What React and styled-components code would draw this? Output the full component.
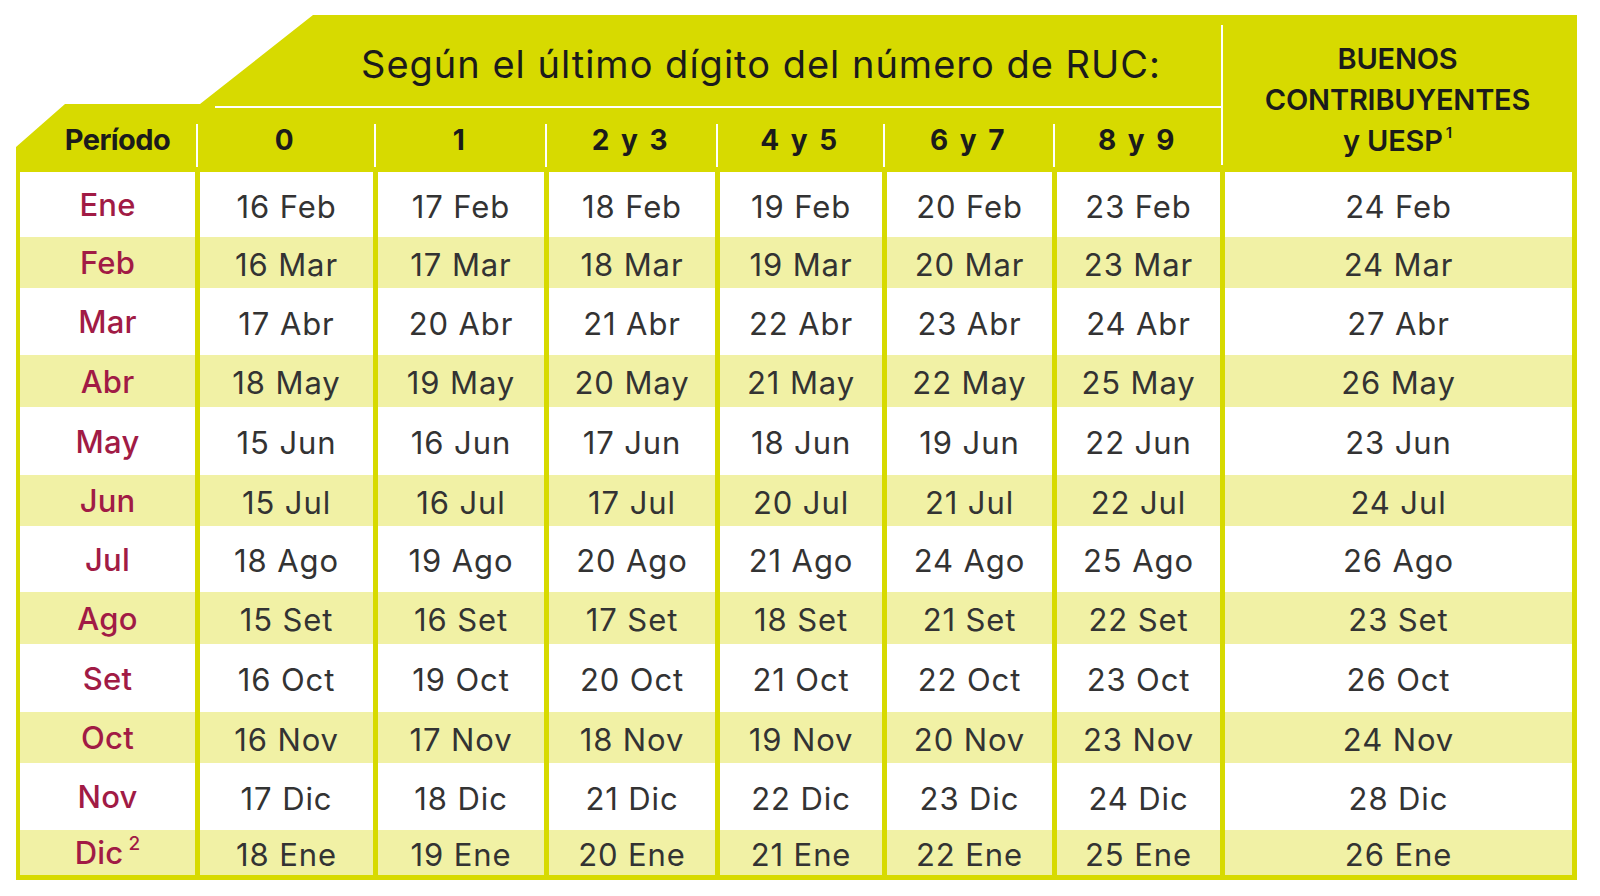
import React from 'react';
import styled, { createGlobalStyle } from 'styled-components';

const YELLOW = '#d7da00';
const STRIPE = '#f1f1a5';
const RED = '#a11b45';
const COLS = '175px 173px 166px 166px 162px 165px 163px 347px';

const GlobalStyle = createGlobalStyle`
    body {
        margin: 0;
        background: #fff;
        font-family: Inter, 'Noto Sans', sans-serif;
    }
`;

const Page = styled.div`
    padding: 15px 0 0 16px;
    width: 1561px;
`;

const Header = styled.div`
    display: grid;
    grid-template-columns: ${COLS};
    grid-template-rows: 93px 64px;
    column-gap: 5px;
    padding: 0 5px 0 4px;
    background: ${YELLOW};
    color: #1b1b1b;
    clip-path: polygon(0 132px, 49px 89px, 184px 89px, 297px 0, 100% 0, 100% 100%, 0 100%);
`;

const PeriodLabel = styled.div`
    grid-column: 1;
    grid-row: 2;
    display: flex;
    align-items: center;
    justify-content: center;
    padding: 0 0 2px 20px;
    font-size: 29px;
    font-weight: 700;
    letter-spacing: -0.6px;
`;

const Title = styled.div`
    grid-column: 2 / 8;
    grid-row: 1;
    margin: 0 -3px 0 15px;
    border-bottom: 2px solid #fff;
    display: flex;
    align-items: center;
    justify-content: center;
    padding: 6px 0 0 84px;
    font-size: 38px;
    font-weight: 400;
    letter-spacing: 1px;
`;

const DigitLabel = styled.div`
    grid-row: 2;
    margin: 16px 0 5px -4px;
    border-left: 2px solid #fff;
    display: flex;
    align-items: center;
    justify-content: center;
    padding-bottom: 12px;
    font-size: 28px;
    font-weight: 700;
    letter-spacing: 2.5px;
`;

const GoodPayers = styled.div`
    grid-column: 8;
    grid-row: 1 / 3;
    margin: 10px 0 7px -4px;
    padding-top: 8px;
    border-left: 2px solid #fff;
    display: flex;
    flex-direction: column;
    align-items: center;
    justify-content: center;
    font-size: 29px;
    font-weight: 600;
    line-height: 41px;
    letter-spacing: -0.2px;
    text-align: center;

    & sup {
        font-size: 15px;
        line-height: 0;
        vertical-align: 13px;
        margin-left: 3px;
    }
`;

const Body = styled.div`
    display: flex;
    flex-direction: column;
    border: solid ${YELLOW};
    border-width: 0 5px 5px 4px;
    background: ${YELLOW};
`;

const Row = styled.div`
    display: grid;
    grid-template-columns: ${COLS};
    column-gap: 5px;
    height: ${(p) => p.$h}px;
`;

const Cell = styled.div`
    background: ${(p) => (p.$striped ? STRIPE : '#fff')};
    display: flex;
    align-items: center;
    justify-content: center;
    padding-top: 3px;
    font-size: 31px;
    font-weight: 400;
    color: #333;
    letter-spacing: 0.9px;
`;

const MonthCell = styled(Cell)`
    color: ${RED};
    font-weight: 500;
    letter-spacing: 0.2px;
    padding-top: 0;

    & sup {
        font-size: 19px;
        font-weight: 500;
        line-height: 0;
        vertical-align: 14px;
        margin-left: 5px;
    }
`;

const digits = ['0', '1', '2 y 3', '4 y 5', '6 y 7', '8 y 9'];

const rows = [
    { m: 'Ene', h: 65, d: ['16 Feb', '17 Feb', '18 Feb', '19 Feb', '20 Feb', '23 Feb', '24 Feb'] },
    { m: 'Feb', h: 51, d: ['16 Mar', '17 Mar', '18 Mar', '19 Mar', '20 Mar', '23 Mar', '24 Mar'] },
    { m: 'Mar', h: 67, d: ['17 Abr', '20 Abr', '21 Abr', '22 Abr', '23 Abr', '24 Abr', '27 Abr'] },
    { m: 'Abr', h: 52, d: ['18 May', '19 May', '20 May', '21 May', '22 May', '25 May', '26 May'] },
    { m: 'May', h: 68, d: ['15 Jun', '16 Jun', '17 Jun', '18 Jun', '19 Jun', '22 Jun', '23 Jun'] },
    { m: 'Jun', h: 51, d: ['15 Jul', '16 Jul', '17 Jul', '20 Jul', '21 Jul', '22 Jul', '24 Jul'] },
    { m: 'Jul', h: 66, d: ['18 Ago', '19 Ago', '20 Ago', '21 Ago', '24 Ago', '25 Ago', '26 Ago'] },
    { m: 'Ago', h: 52, d: ['15 Set', '16 Set', '17 Set', '18 Set', '21 Set', '22 Set', '23 Set'] },
    { m: 'Set', h: 68, d: ['16 Oct', '19 Oct', '20 Oct', '21 Oct', '22 Oct', '23 Oct', '26 Oct'] },
    { m: 'Oct', h: 51, d: ['16 Nov', '17 Nov', '18 Nov', '19 Nov', '20 Nov', '23 Nov', '24 Nov'] },
    { m: 'Nov', h: 67, d: ['17 Dic', '18 Dic', '21 Dic', '22 Dic', '23 Dic', '24 Dic', '28 Dic'] },
    { m: 'Dic', h: 45, sup: '2', d: ['18 Ene', '19 Ene', '20 Ene', '21 Ene', '22 Ene', '25 Ene', '26 Ene'] },
];

const App = () => {
    return (
        <Page>
            <GlobalStyle />
            <Header>
                <PeriodLabel>Período</PeriodLabel>
                <Title>Según el último dígito del número de RUC:</Title>
                {digits.map((d) => (
                    <DigitLabel key={d}>{d}</DigitLabel>
                ))}
                <GoodPayers>
                    <span>BUENOS</span>
                    <span>CONTRIBUYENTES</span>
                    <span>
                        y UESP<sup>1</sup>
                    </span>
                </GoodPayers>
            </Header>
            <Body>
                {rows.map((row, i) => {
                    const striped = i % 2 === 1;
                    return (
                        <Row key={row.m} $h={row.h}>
                            <MonthCell $striped={striped}>
                                <span>
                                    {row.m}
                                    {row.sup && <sup>{row.sup}</sup>}
                                </span>
                            </MonthCell>
                            {row.d.map((date, j) => (
                                <Cell key={j} $striped={striped}>
                                    {date}
                                </Cell>
                            ))}
                        </Row>
                    );
                })}
            </Body>
        </Page>
    );
};

export default App;
